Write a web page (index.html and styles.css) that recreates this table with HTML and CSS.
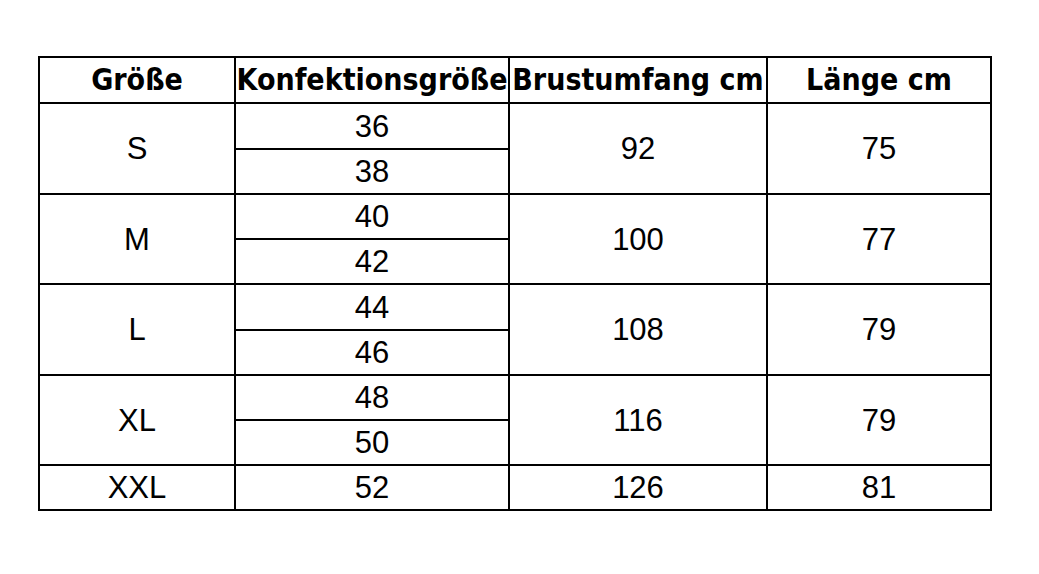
FILE: index.html
```html
<!DOCTYPE html>
<html lang="de">
<head>
<meta charset="utf-8">
<title>Größentabelle</title>
<link rel="stylesheet" href="styles.css">
</head>
<body>
<table class="size-table">
  <colgroup>
    <col class="c1"><col class="c2"><col class="c3"><col class="c4">
  </colgroup>
  <thead>
    <tr class="head">
      <th>Größe</th>
      <th>Konfektionsgröße</th>
      <th>Brustumfang cm</th>
      <th>Länge cm</th>
    </tr>
  </thead>
  <tbody>
    <tr class="tall"><td rowspan="2">S</td><td>36</td><td rowspan="2">92</td><td rowspan="2">75</td></tr>
    <tr><td>38</td></tr>
    <tr><td rowspan="2">M</td><td>40</td><td rowspan="2">100</td><td rowspan="2">77</td></tr>
    <tr><td>42</td></tr>
    <tr class="tall"><td rowspan="2">L</td><td>44</td><td rowspan="2">108</td><td rowspan="2">79</td></tr>
    <tr><td>46</td></tr>
    <tr><td rowspan="2">XL</td><td>48</td><td rowspan="2">116</td><td rowspan="2">79</td></tr>
    <tr><td>50</td></tr>
    <tr><td>XXL</td><td>52</td><td>126</td><td>81</td></tr>
  </tbody>
</table>
</body>
</html>
```

FILE: styles.css
```css
html, body {
  margin: 0;
  background: #fff;
}
body {
  padding: 56px 0 0 38px;
}
.size-table {
  border-collapse: collapse;
  table-layout: fixed;
  width: 952px;
  color: #000;
  font-family: "Liberation Sans", Arial, sans-serif;
}
.c1 { width: 196px; }
.c2 { width: 274px; }
.c3 { width: 258px; }
.c4 { width: 224px; }
.size-table th,
.size-table td {
  border: 2px solid #000;
  padding: 0;
  text-align: center;
  vertical-align: middle;
  white-space: nowrap;
}
.size-table th {
  font-family: "DejaVu Sans Condensed", "DejaVu Sans", sans-serif;
  font-stretch: semi-condensed;
  font-weight: 700;
  font-size: 30px;
  letter-spacing: 0;
  line-height: 1;
}
.size-table td {
  font-size: 31px;
  line-height: 1;
}
.head { height: 46px; }
.size-table tbody tr { height: 45px; }
.size-table tbody tr.tall { height: 46px; }
```
